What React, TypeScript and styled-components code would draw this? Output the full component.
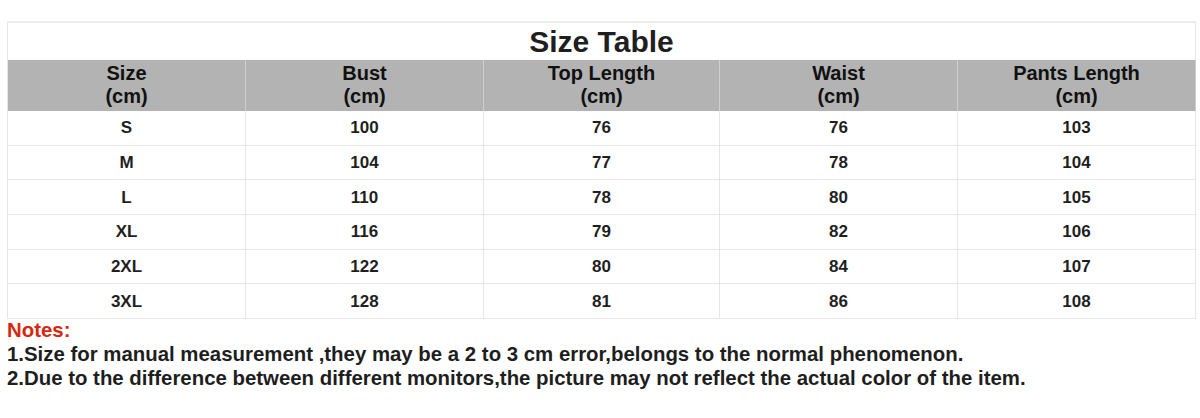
import React from "react";
import styled, { createGlobalStyle } from "styled-components";

const Global = createGlobalStyle`
  html, body { margin: 0; padding: 0; background: #ffffff; }
  body { font-family: "Liberation Sans", Arial, sans-serif; color: #1e1e1e; }
`;

const Page = styled.div`
  width: 1200px;
  height: 418px;
  box-sizing: border-box;
  padding: 21px 4px 0 7px;
  display: flex;
  flex-direction: column;
  overflow: hidden;
`;

const Table = styled.div`
  display: grid;
  grid-template-columns: 238px 238px 236px 238px 238px;
  grid-template-rows: 37px 51px repeat(6, 34.67px);
  border-top: 2px solid #ececec;
  border-left: 1px solid #e6e6e6;
  width: max-content;
`;

const Title = styled.div`
  grid-column: 1 / -1;
  display: flex;
  align-items: center;
  justify-content: center;
  font-size: 30px;
  font-weight: 700;
  color: #1f1f1f;
  border-right: 1px solid #e6e6e6;
  box-sizing: border-box;
`;

const HeadCell = styled.div`
  background: #b3b3b3;
  display: flex;
  flex-direction: column;
  align-items: center;
  justify-content: center;
  font-size: 20px;
  line-height: 23px;
  font-weight: 700;
  color: #111;
  text-align: center;
  border-right: 1px solid #cfcfcf;
  box-sizing: border-box;
  padding-bottom: 2px;
`;

const Cell = styled.div`
  display: flex;
  align-items: center;
  justify-content: center;
  font-size: 17px;
  font-weight: 700;
  color: #1f1f1f;
  border-right: 1px solid #e6e6e6;
  border-bottom: 1px solid #e6e6e6;
  box-sizing: border-box;
  padding-top: 1px;
`;

const Notes = styled.div`
  display: flex;
  flex-direction: column;
  font-size: 20.4px;
  line-height: 24px;
  font-weight: 700;
  margin-top: -1px;
`;

const NotesTitle = styled.div`
  color: #d8270e;
`;

const NoteLine = styled.div`
  color: #1e1e1e;
`;

const headers = ["Size", "Bust", "Top Length", "Waist", "Pants Length"];
const rows = [
  ["S", "100", "76", "76", "103"],
  ["M", "104", "77", "78", "104"],
  ["L", "110", "78", "80", "105"],
  ["XL", "116", "79", "82", "106"],
  ["2XL", "122", "80", "84", "107"],
  ["3XL", "128", "81", "86", "108"],
];

export default function App() {
  return (
    <>
      <Global />
      <Page>
        <Table>
          <Title>Size Table</Title>
          {headers.map((h) => (
            <HeadCell key={h}>
              <span>{h}</span>
              <span>(cm)</span>
            </HeadCell>
          ))}
          {rows.map((r) =>
            r.map((v, i) => <Cell key={r[0] + i}>{v}</Cell>)
          )}
        </Table>
        <Notes>
          <NotesTitle>Notes:</NotesTitle>
          <NoteLine>
            1.Size for manual measurement ,they may be a 2 to 3 cm error,belongs to the normal phenomenon.
          </NoteLine>
          <NoteLine>
            2.Due to the difference between different monitors,the picture may not reflect the actual color of the item.
          </NoteLine>
        </Notes>
      </Page>
    </>
  );
}
